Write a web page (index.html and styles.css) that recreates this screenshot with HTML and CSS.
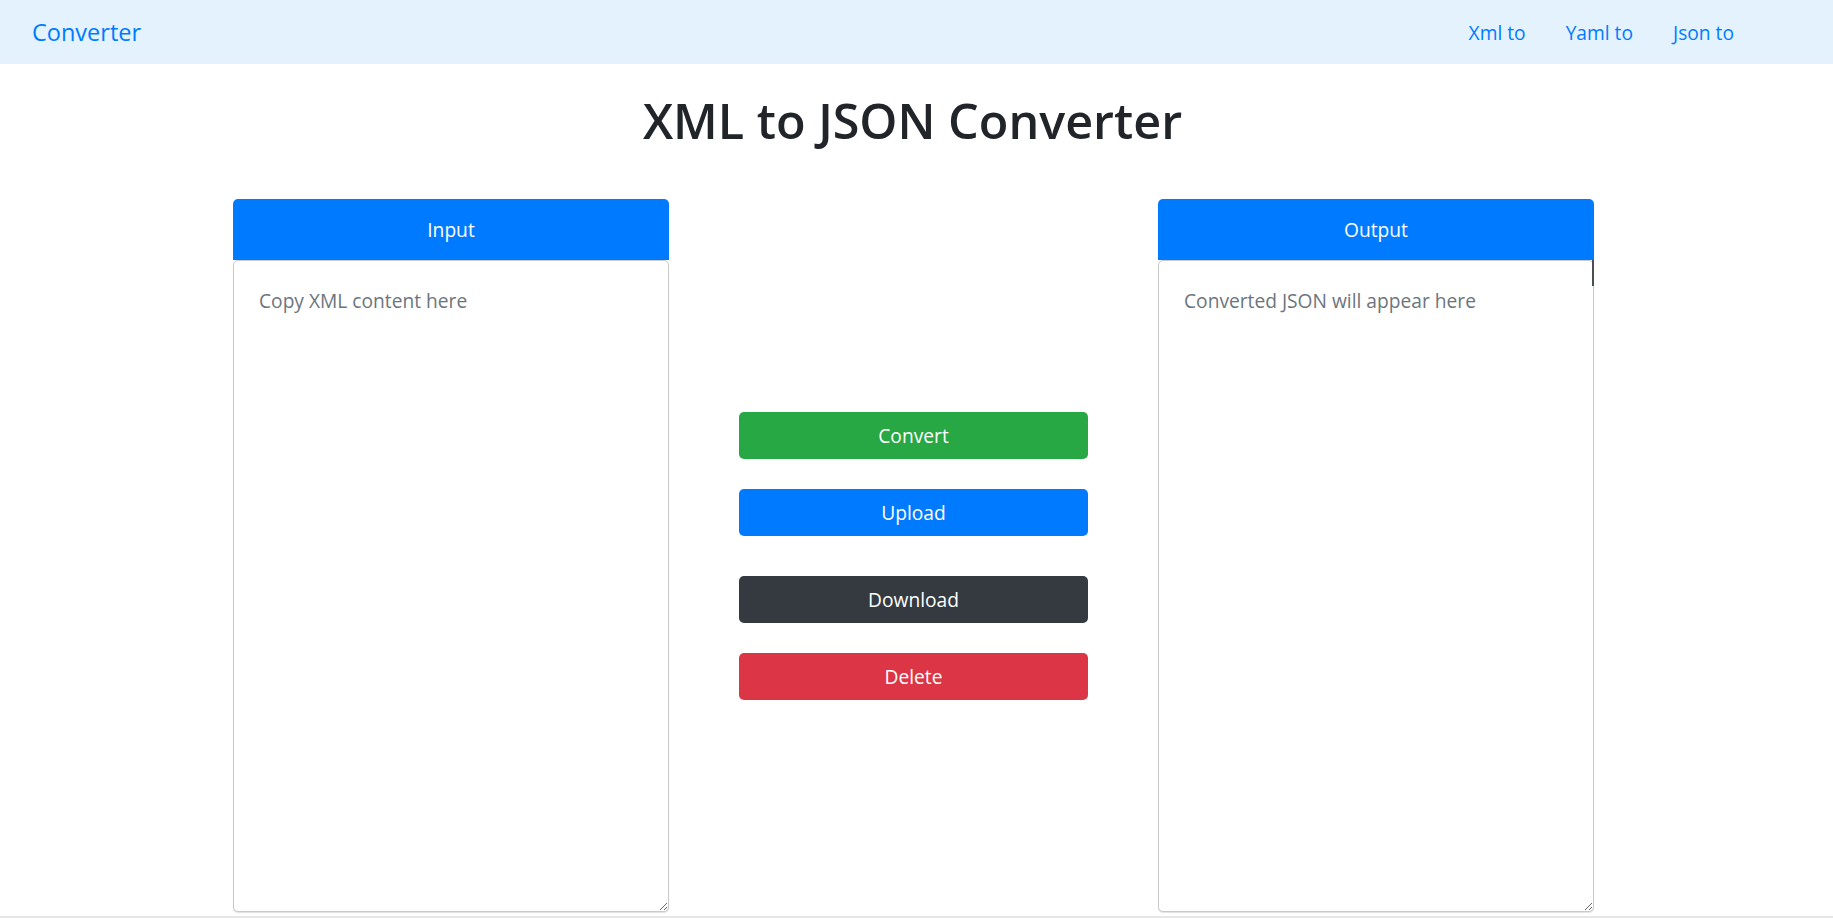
FILE: index.html
```html
<!DOCTYPE html>
<html lang="en">
<head>
<meta charset="utf-8">
<title>XML to JSON Converter</title>
<link rel="stylesheet" href="styles.css">
</head>
<body>
<header class="navbar">
  <a class="brand" href="#">Converter</a>
  <nav class="nav-links">
    <a class="nav-link" href="#">Xml to</a>
    <a class="nav-link" href="#">Yaml to</a>
    <a class="nav-link" href="#">Json to</a>
  </nav>
</header>
<main class="page">
  <h1 class="title">XML to JSON Converter</h1>
  <div class="workspace">
    <section class="card">
      <div class="card-header">Input</div>
      <textarea class="editor" placeholder="Copy XML content here"></textarea>
    </section>
    <div class="actions">
      <button class="btn btn-success">Convert</button>
      <button class="btn btn-primary gap-30">Upload</button>
      <button class="btn btn-dark gap-40">Download</button>
      <button class="btn btn-danger gap-30">Delete</button>
    </div>
    <section class="card card-output">
      <div class="card-header">Output</div>
      <textarea class="editor" placeholder="Converted JSON will appear here"></textarea>
    </section>
  </div>
</main>
</body>
</html>
```
FILE: styles.css
```css
* { box-sizing: border-box; }
html, body { margin: 0; padding: 0; background: #fff; }
body {
  font-family: "Open Sans", "Noto Sans", Arial, sans-serif;
  color: #212529;
  font-size: 19.2px;
  overflow: hidden;
}
.navbar {
  height: 64px;
  background: #e3f2fd;
  display: flex;
  align-items: center;
  justify-content: space-between;
  padding: 0 99px 0 32px;
}
.brand {
  color: #007bff;
  font-size: 23.5px;
  text-decoration: none;
}
.nav-links {
  display: flex;
  gap: 40px;
}
.nav-link {
  color: #007bff;
  text-decoration: none;
  font-size: 19.2px;
}
.page {
  border-bottom: 2px solid #e6e6e6;
}
.title {
  margin: 0;
  padding: 27px 8px 50px 0;
  text-align: center;
  font-size: 48.5px;
  line-height: 58px;
  font-weight: 600;
  color: #212529;
}
.workspace {
  display: grid;
  grid-template-columns: 436px 349px 436px;
  column-gap: 70px;
  justify-content: center;
  padding-right: 6px;
  padding-bottom: 4px;
}
.card {
  display: flex;
  flex-direction: column;
  position: relative;
}
.card-output::after {
  content: "";
  position: absolute;
  right: 0;
  top: 61px;
  width: 2px;
  height: 26px;
  background: #4a4f55;
}
.card-header {
  height: 61px;
  background: #007bff;
  color: #fff;
  border-radius: 5px 5px 0 0;
  display: flex;
  align-items: center;
  justify-content: center;
  font-size: 19.2px;
}
.editor {
  display: block;
  width: 100%;
  height: 652px;
  border: 1px solid #c9c9c9;
  border-radius: 5px;
  box-shadow: 0 1px 1px rgba(0,0,0,0.12);
  padding: 26px 25px 25px;
  font-family: inherit;
  font-size: 19.2px;
  line-height: 1.5;
  color: #495057;
  resize: both;
  outline: none;
}
.editor::placeholder { color: #6c757d; opacity: 1; }
.actions {
  display: flex;
  flex-direction: column;
  justify-content: center;
}
.btn {
  height: 47px;
  width: 100%;
  border: none;
  border-radius: 5px;
  color: #fff;
  font-family: inherit;
  font-size: 19.2px;
  cursor: pointer;
}
.gap-30 { margin-top: 30px; }
.gap-40 { margin-top: 40px; }
.btn-success { background: #28a745; }
.btn-primary { background: #007bff; }
.btn-dark { background: #343a40; }
.btn-danger { background: #dc3545; }
```
